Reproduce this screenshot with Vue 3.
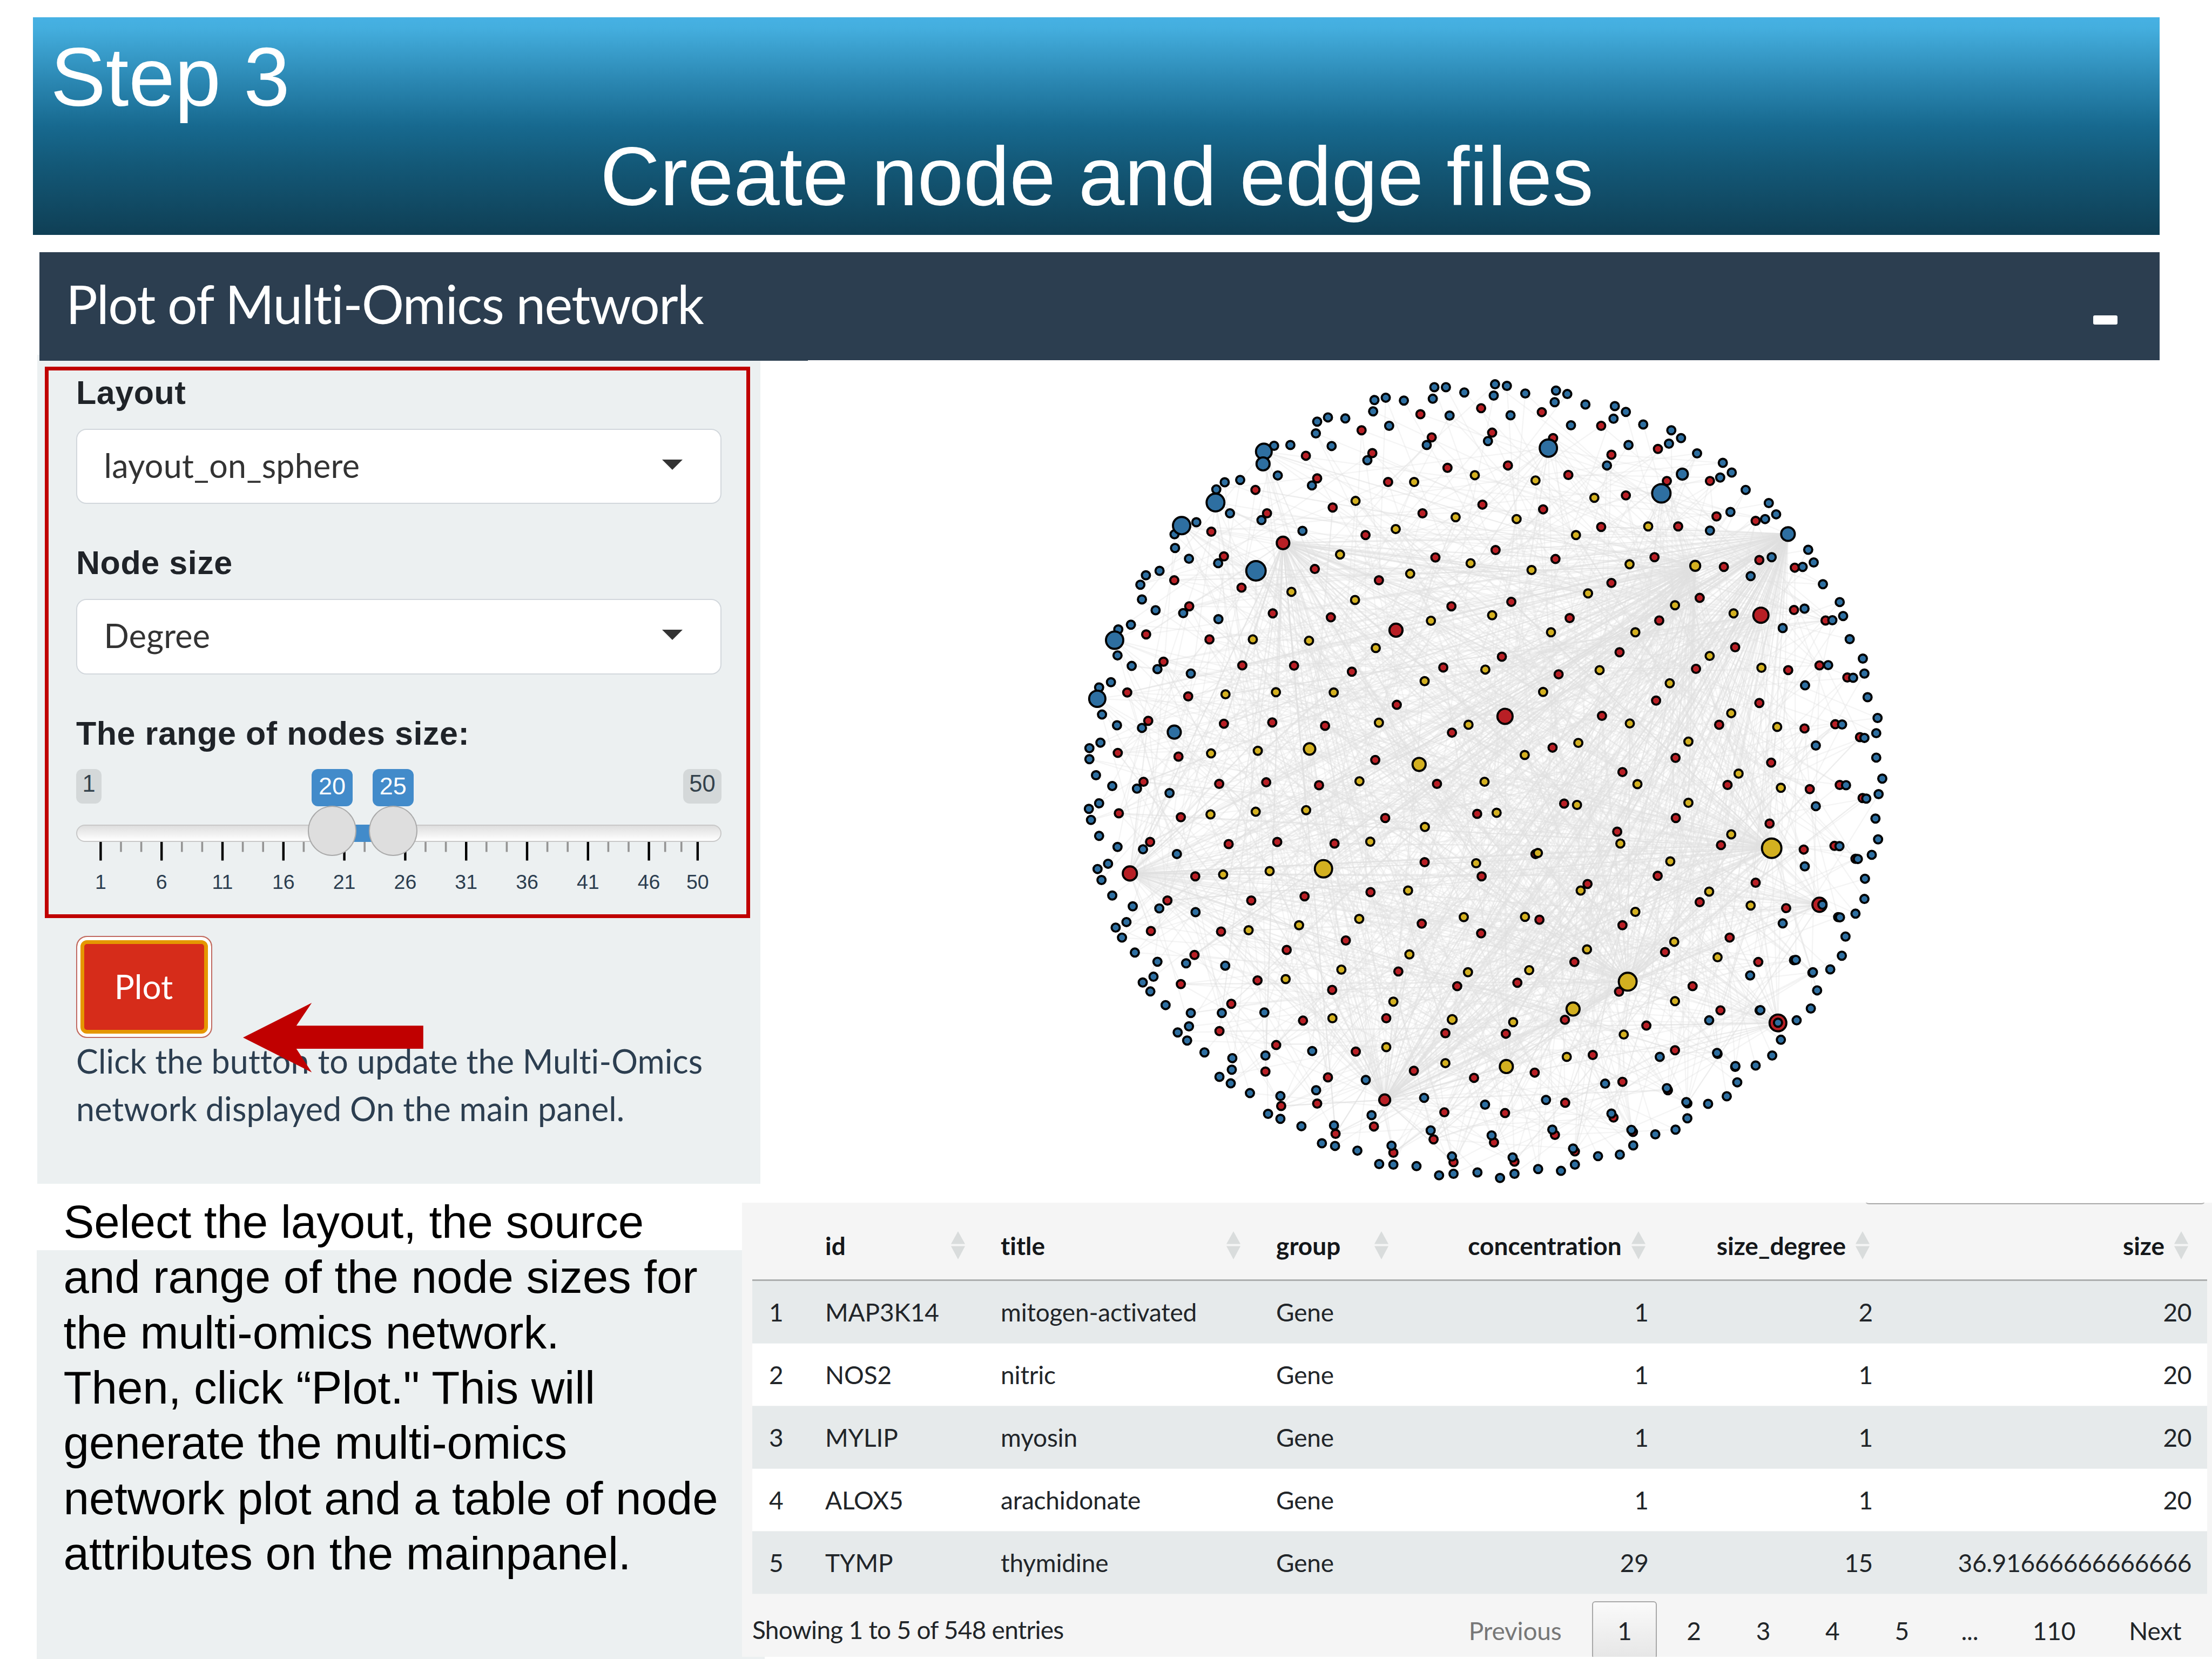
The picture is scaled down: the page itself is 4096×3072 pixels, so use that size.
<script setup>
/* Node positions, listed per quadrant of a 3136 x 3136 canvas. */
const quadrants = [
  {
    x: 0, y: 0,
    red: '1545,158 1314,181 1090,242 1357,269 1131,329 878,339 921,425 686,469 1191,439 1417,385 980,536 1322,558 1550,525 730,558 518,628 1105,641 566,722 1371,726 912,770 377,813 1156,813 633,841 434,912 1432,912 752,939 973,954 270,1019 511,1038 336,1123 636,1137 833,1138 1053,1161 1401,1145 198,1240 430,1255 1224,1287 278,1348 566,1359 750,1354 951,1367 1434,1393 162,1470 393,1484 1142,1497',
    yellow: '1290,439 1521,413 1067,511 1448,573 1220,618 1008,715 1505,748 1275,788 823,857 1065,888 1354,967 676,1038 890,1043 1144,1071 1561,1153 1330,1197 572,1247 764,1239 984,1240 1156,1355 1497,1363 517,1472 695,1462',
    blue: '1367,78 1411,78 1481,98 1361,122 1139,127 1182,118 1251,129 1134,170 921,209 962,193 1028,197 916,254 1195,225 1425,186 976,302 757,301 819,298 1338,298 1112,356 771,414 901,452 569,440 628,431 537,467 589,558 709,584 865,625 378,638 461,592 380,690 433,731 544,748 321,777 269,794 248,830 254,886 306,927 411,938 545,961 212,982 164,1000 161,1099 215,1139 313,1151 440,1168 136,1201 91,1221 102,1324 159,1365 254,1375 96,1431 54,1452 54,1494 79,1555',
    redBig: '791,671,24 1221,1003,25',
    yellowBig: '892,1455,22 1309,1514,25',
    blueBig: '718,323,30 715,370,25 534,517,34 405,605,33 688,777,37 150,1041,33 84,1264,31 377,1391,25'
  },
  {
    x: 1568, y: 0,
    red: '208,173 19,251 251,272 434,225 473,335 650,313 848,435 684,435 79,376 309,412 528,490 213,543 873,570 1022,587 434,610 727,608 32,698 637,725 260,732 901,762 1036,736 1171,765 473,823 809,880 92,895 655,966 1168,926 1288,966 314,957 944,1068 504,1087 56,1104 795,1150 1265,1137 1146,1155 1371,1183 272,1171 643,1271 1036,1280 437,1329 883,1363 1325,1361 1208,1377 1419,1410 249,1450 717,1489 1081,1507 515,1543',
    yellow: '184,433 408,499 112,580 338,641 613,608 542,752 169,774 384,863 715,908 938,939 19,946 564,1011 243,1011 847,1101 1044,1146 428,1155 695,1205 213,1238 929,1319 1104,1371 543,1358 766,1427 347,1432 143,1478 957,1549',
    blue: '30,67 75,73 145,102 25,110 262,91 305,104 257,135 374,144 486,150 528,172 481,198 89,185 319,223 594,220 701,242 738,272 692,293 538,298 799,330 897,366 931,403 887,422 456,376 3,283 984,469 1072,519 1100,562 1058,580 926,553 848,624 1083,725 1003,797 1222,697 1243,745 1201,762 1278,828 1342,896 1355,949 1314,965 1208,921 1125,995 1380,1037 1430,1111 1436,1168 1393,1184 1298,1136 1210,1213 1448,1258 1486,1337 1481,1395 1436,1413 1351,1362 1251,1442 1481,1488 1504,1568',
    redBig: '1042,946,29 68,1331,29',
    yellowBig: '792,758,19',
    blueBig: '233,310,33 663,482,35 743,409,21 1145,637,26'
  },
  {
    x: 0, y: 1568,
    red: '260,12 548,20 727,14 928,25 1377,20 166,132 402,147 1180,150 1530,134 285,241 584,249 769,241 987,247 1330,318 457,372 1547,372 1124,432 351,464 670,464 873,448 288,580 555,582 1319,552 1545,589 1030,616 805,652 454,671 694,768 1230,734 402,782 978,804 1454,790 594,857 867,921 1184,912 549,961 1409,969 765,1014 1068,1039 724,1115 1289,1112 962,1137 1518,1139 921,1237 784,1246 1405,1270 1137,1324 991,1352 1364,1373 1211,1424 1440,1460',
    yellow: '1082,10 1558,12 515,136 687,126 879,120 1331,184 1123,240 1526,322 563,365 740,352 1267,426 1479,527 1081,534 852,558 660,577 1272,669 1013,727 1495,737 801,763 1211,849 979,912 1435,917,17 1184,1022 1409,1083',
    blue: '141,28 235,38 359,55 91,94 52,115 60,157 91,218 161,260 258,269 387,287 125,324 85,344 100,386 141,445 219,486 320,494 458,508 195,546 154,567 178,605 227,662 313,697 422,703 571,712 298,754 257,776 286,810 344,862 440,892 558,892 720,890 433,943 390,966 426,997 492,1042 598,1064 724,1054 902,1037 596,1108 549,1135 592,1160 665,1197 781,1208 917,1186 1106,1147 734,1276 781,1295 861,1323 985,1320 1128,1281 1328,1215 1560,1241 939,1388 989,1398 1074,1416 1204,1397 1353,1339 1157,1467 1211,1469 1299,1475 1434,1438 1385,1510 1440,1504 1531,1499',
    redBig: '208,361,27 1178,1223,21',
    yellowBig: '945,343,33',
    blueBig: ''
  },
  {
    x: 1568, y: 1568,
    red: '915,24 1228,40 1342,24 1429,74 293,95 718,150 1075,171 495,202 890,253 1205,270 1322,256 184,287 649,370 1022,396 382,401 809,470 1138,493 199,537 515,558 923,605 677,660 332,698 1032,698 115,777 502,811 782,790 888,882 296,918 606,940 71,971 715,1034 402,1052 181,1119 515,1154 297,1234 68,1273 481,1290 258,1356 26,1385 334,1419 555,1345 104,1458 688,1186 762,1236 1402,305 1336,527 1168,691 1238,739 1037,882 877,1048 944,1097',
    yellow: '572,21 1118,35 766,92 36,130 342,100 507,247 929,212 193,283 697,315 356,426 845,430 144,526 564,507 1003,483 712,621 380,650 877,680 160,729 715,847 99,927 520,974 303,1059',
    blue: '1490,59 1366,25 1443,76 1251,105 1478,152 1488,231 1341,257 1464,290 1411,306 1209,334 1438,381 1436,458 1402,514 1343,528 1125,551 1276,480 1364,601 1350,674 1306,726 1240,737 1175,690 1001,749 1256,806 1232,875 1178,920 1040,881 845,920 1107,929 1118,994 1085,1054 1022,1092 945,1094 875,1044 657,1059 952,1156 912,1209 841,1238 758,1231 684,1178 449,1161 762,1293 717,1336 640,1354 549,1337 473,1275 224,1223 556,1396 505,1431 422,1437 327,1408 248,1336 17,1358 334,1469 281,1493 194,1486 97,1442 104,1504 49,1520',
    redBig: '1265,480,27 1107,930,32',
    yellowBig: '1083,265,37 535,773,34 327,877,25 73,1096,25',
    blueBig: ''
  }
]

function parse(list, q, color) {
  return list.split(' ').filter(Boolean).map((item) => {
    const [x, y, r = 15.5] = item.split(',').map(Number)
    return { x: x + q.x, y: y + q.y, r, color }
  })
}
const collect = (key, color) => quadrants.flatMap((q) => parse(q[key], q, color))

const nodes = [
  ...collect('redBig', 'red'),
  ...collect('red', 'red'),
  ...collect('yellow', 'yellow'),
  ...collect('yellowBig', 'yellow'),
  ...collect('blue', 'blue'),
  ...collect('blueBig', 'blue')
]

/* Seeded generator, so the edges are the same on every load. */
let seed = 20231
function random() {
  seed = (seed * 1664525 + 1013904223) % 4294967296
  return seed / 4294967296
}
const line = (x, y, n) => `M${x} ${y}L${n.x} ${n.y}`
const pick = (list) => list[Math.floor(random() * list.length)]

/* [x, y, number of edges, rightmost x a neighbour may have, topmost y] */
const hubs = [
  [2713, 637, 190, 2700, 560],
  [2360, 758, 130, 2450, 430],
  [791, 671, 110, 2900, 620],
  [208, 1929, 80, 2600, 900],
  [1178, 2791, 120, 2900, 1100],
  [2651, 1833, 120, 2900, 600],
  [2103, 2341, 120, 3000, 700],
  [2833, 2048, 35, 2800, 900],
  [2675, 2498, 35, 2700, 1300],
  [2610, 946, 35, 3000, 900],
  [1641, 2664, 25, 3000, 900],
  [945, 1911, 16, 3000, 400],
  [1636, 1331, 16, 3000, 400],
  [1895, 2445, 20, 3000, 400],
  [688, 777, 14, 3000, 500],
  [405, 605, 12, 3000, 600],
  [534, 517, 10, 3000, 500],
  [718, 323, 12, 3000, 300],
  [2231, 482, 14, 3000, 400],
  [1801, 310, 14, 3000, 400],
  [150, 1041, 8, 2600, 1000],
  [84, 1264, 8, 2600, 900]
]
const inner = nodes.filter((n) => n.color !== 'blue')
const hubEdges = hubs.flatMap(([x, y, count, maxX, minY]) => {
  const pool = (count > 14 ? inner : nodes).filter((n) => n.x <= maxX && n.y >= minY)
  return Array.from({ length: count }, () => line(x, y, pick(pool)))
})
const looseEdges = Array.from({ length: 520 }, () => {
  const a = pick(nodes)
  return line(a.x, a.y, pick(inner))
})
const edges = [...looseEdges, ...hubEdges]

/* Range slider */
const pos = (v) => 45.4 + (v - 1) * 22.56
const majors = [1, 6, 11, 16, 21, 26, 31, 36, 41, 46, 50]
const minors = majors.slice(0, -1).flatMap((v, i) => {
  const step = (majors[i + 1] - v) / 3
  return [v + step, v + step * 2]
})
const range = [20, 25]

/* Node table */
const columns = [
  { key: 'n', label: '' },
  { key: 'id', label: 'id' },
  { key: 'title', label: 'title' },
  { key: 'group', label: 'group' },
  { key: 'conc', label: 'concentration', num: true },
  { key: 'degree', label: 'size_degree', num: true },
  { key: 'size', label: 'size', num: true }
]
const rows = [
  { n: 1, id: 'MAP3K14', title: 'mitogen-activated', group: 'Gene', conc: '1', degree: '2', size: '20' },
  { n: 2, id: 'NOS2', title: 'nitric', group: 'Gene', conc: '1', degree: '1', size: '20' },
  { n: 3, id: 'MYLIP', title: 'myosin', group: 'Gene', conc: '1', degree: '1', size: '20' },
  { n: 4, id: 'ALOX5', title: 'arachidonate', group: 'Gene', conc: '1', degree: '1', size: '20' },
  { n: 5, id: 'TYMP', title: 'thymidine', group: 'Gene', conc: '29', degree: '15', size: '36.91666666666666' }
]
const pages = ['1', '2', '3', '4', '5']
</script>

<template>
  <div class="slide">
    <header class="banner">
      <div class="step">Step 3</div>
      <div class="title">Create node and edge files</div>
    </header>

    <div class="bar">
      <span class="bar-title">Plot of Multi-Omics network</span>
      <span class="collapse"></span>
    </div>

    <main class="main">
      <aside class="panel">
        <section class="settings">
          <label class="label">Layout</label>
          <div class="select">
            <span>layout_on_sphere</span>
            <i class="caret"></i>
          </div>
          <label class="label second">Node size</label>
          <div class="select">
            <span>Degree</span>
            <i class="caret"></i>
          </div>
          <label class="label second">The range of nodes size:</label>
          <div class="slider">
            <div class="ends">
              <span class="end min">1</span>
              <span class="end max">50</span>
            </div>
            <div class="track"></div>
            <div class="fill" :style="{ left: pos(range[0]) + 'px', width: pos(range[1]) - pos(range[0]) + 'px' }"></div>
            <svg class="ticks" width="1195" height="36">
              <rect v-for="v in minors" :key="'m' + v" :x="pos(v) - 1.8" y="0" width="3.6" height="18.5" fill="#949494" />
              <rect v-for="v in majors" :key="v" :x="pos(v) - 2.2" y="0" width="4.4" height="34.5" fill="#000" />
            </svg>
            <div class="scale">
              <span v-for="v in majors" :key="v" :style="{ left: pos(v) + 'px' }">{{ v }}</span>
            </div>
            <template v-for="v in range" :key="v">
              <span class="value" :style="{ left: pos(v) + 'px' }">{{ v }}</span>
              <span class="handle" :style="{ left: pos(v) + 'px' }"></span>
            </template>
          </div>
        </section>
        <button class="plot">Plot</button>
        <p class="help">Click the button to update the Multi-Omics<br />network displayed On the main panel.</p>
        <svg class="arrow" width="334" height="130" viewBox="0 0 334 130">
          <path d="M0 64.2L127.3 0L98.8 42.2H333.8V85H98.8L127.3 128.7Z" fill="#c00000" />
        </svg>
      </aside>

      <svg class="network" viewBox="0 0 3136 3136">
        <path v-for="(d, i) in edges" :key="'e' + i" class="edge" :d="d" />
        <circle v-for="(n, i) in nodes" :key="i" :cx="n.x" :cy="n.y" :r="n.r" :class="n.color" />
      </svg>
    </main>

    <div class="bottom">
      <section class="note">
        <p>Select the layout, the source<br />and range of the node sizes for<br />the multi-omics network.<br />Then, click “Plot." This will<br />generate the multi-omics<br />network plot and a table of node<br />attributes on the mainpanel.</p>
      </section>

      <section class="data">
        <i class="search-edge"></i>
        <div class="row head">
          <div v-for="c in columns" :key="c.key" class="cell" :class="{ num: c.num }">
            <span>{{ c.label }}</span>
            <svg v-if="c.label" class="sort" width="26" height="52" viewBox="0 0 26 52">
              <path d="M13 0L26 23.5H0ZM0 27.5H26L13 52Z" fill="#d9dcdc" />
            </svg>
          </div>
        </div>
        <div v-for="r in rows" :key="r.n" class="row body">
          <div v-for="c in columns" :key="c.key" class="cell" :class="{ num: c.num }">{{ r[c.key] }}</div>
        </div>
        <footer class="foot">
          <span class="info">Showing 1 to 5 of 548 entries</span>
          <nav class="pager">
            <span class="page prev">Previous</span>
            <span v-for="p in pages" :key="p" class="page" :class="{ current: p === '1' }">{{ p }}</span>
            <span class="page dots">...</span>
            <span class="page last">110</span>
            <span class="page next">Next</span>
          </nav>
        </footer>
      </section>
    </div>
  </div>
</template>

<style>
body {
  background: #fff;
}
</style>

<style scoped>
.slide {
  width: 4096px;
  height: 3072px;
  overflow: hidden;
  display: flex;
  flex-direction: column;
  background: #fff;
  font-family: Lato, "Open Sans", sans-serif;
  font-variant-ligatures: none;
  box-sizing: border-box;
  padding-top: 32px;
}
.slide * {
  box-sizing: border-box;
}

.banner {
  flex: none;
  width: 3938px;
  height: 403px;
  margin-left: 61px;
  padding: 18.2px 0 0 32.6px;
  background: linear-gradient(#46b1e4 0%, #44aede 5%, #2a86b1 30%, #17698f 50%, #135877 68%, #0f3f55 100%);
  color: #fff;
  font: 153.6px/184.4px "Liberation Sans", Arial, sans-serif;
  font-variant-ligatures: none;
  letter-spacing: -0.2px;
}
.step {
  padding-top: 1px;
  margin-bottom: -1px;
}
.title {
  margin-left: -32.6px;
  padding-left: 2px;
  text-align: center;
}

.bar {
  flex: none;
  position: relative;
  z-index: 1;
  width: 3926px;
  height: 200px;
  margin: 32px 0 0 73px;
  padding: 0 78px 0 49px;
  display: flex;
  align-items: center;
  justify-content: space-between;
  background: #2c3e50;
  color: #fff;
}
.bar::after {
  content: "";
  position: absolute;
  left: 0;
  top: 100%;
  width: 1423px;
  height: 1px;
  background: #2c3e50;
}
.bar-title {
  font-size: 98px;
  line-height: 120px;
  letter-spacing: -1.7px;
  padding-bottom: 11px;
}
.collapse {
  width: 45px;
  height: 17px;
  margin-top: 51px;
  border-radius: 3px;
  background: #fff;
}

.main {
  flex: none;
  display: flex;
  height: 1534.5px;
  margin-top: -10px;
  padding-left: 69px;
}
.panel {
  position: relative;
  flex: none;
  width: 1339px;
  background: #ecf0f1;
  padding: 22px 0 0 14px;
}
.settings {
  width: 1306px;
  height: 1021px;
  border: 7px solid #c00000;
  padding: 5.6px 52px 0 51px;
}
.label {
  display: block;
  height: 70px;
  font: bold 61px/70px "Liberation Sans", Arial, sans-serif;
  letter-spacing: 0.55px;
  color: #1f2328;
}
.label.second {
  margin-top: 74px;
}
.select {
  display: flex;
  align-items: center;
  justify-content: space-between;
  width: 1195px;
  height: 139.5px;
  margin-top: 32px;
  padding: 0 70px 3px 49.5px;
  border: 2.6px solid #d2d7dc;
  border-radius: 19px;
  background: #fff;
  color: #333;
  font-size: 61px;
  letter-spacing: 0.25px;
}
.label.second + .select {
  padding-bottom: 5px;
}
.caret {
  border: 19px solid transparent;
  border-top-color: #333;
  border-bottom: 0;
  margin-top: -2px;
}

.slider {
  position: relative;
  width: 1195px;
  margin-top: 31px;
  font-family: "Liberation Sans", Arial, sans-serif;
}
.ends {
  display: flex;
  justify-content: space-between;
  height: 103px;
}
.end {
  height: 64px;
  border-radius: 12px;
  background: #d4d8d9;
  color: #34424c;
  font-size: 43.5px;
  line-height: 54px;
  text-align: center;
}
.min {
  width: 47px;
}
.max {
  width: 71px;
}
.track {
  height: 32px;
  border: 2.5px solid #c8c8c8;
  border-radius: 16px;
  background: linear-gradient(#dedede, #fff);
}
.fill {
  position: absolute;
  top: 103px;
  height: 32px;
  background: #428bca;
}
.ticks {
  display: block;
}
.scale {
  position: relative;
  height: 60px;
  font-size: 37.5px;
  line-height: 40px;
  color: #2c3e50;
}
.scale span {
  position: absolute;
  top: 18.5px;
  transform: translateX(-50%);
}
.value {
  position: absolute;
  top: 0;
  width: 76px;
  height: 69px;
  border-radius: 12px;
  background: #428bca;
  color: #fff;
  font-size: 45px;
  line-height: 63px;
  text-align: center;
  transform: translateX(-50%);
}
.handle {
  position: absolute;
  top: 68.5px;
  width: 90px;
  height: 92.5px;
  border: 2.5px solid #aaa;
  border-radius: 50%;
  background: #dedede;
  transform: translateX(-50%);
}

.plot {
  display: block;
  width: 252px;
  height: 189px;
  margin: 33px 0 0 58px;
  padding: 0 2px 3px 0;
  border: 2.5px solid #c06a62;
  border-radius: 20px;
  background: #d62c1a;
  box-shadow: inset 0 0 0 6px #fff, inset 0 0 0 13px #e59700;
  color: #fff;
  font: 62px/72px Lato, sans-serif;
}
.help {
  margin: -1px 0 0 58px;
  white-space: nowrap;
  color: #2c3e50;
  font-size: 61px;
  line-height: 87.5px;
  letter-spacing: 0.13px;
}
.arrow {
  position: absolute;
  left: 381px;
  top: 1200.3px;
}

.network {
  flex: none;
  width: 1525.6px;
  height: 1525.6px;
  margin: 22px 0 0 582.8px;
  overflow: visible;
}
.network circle {
  stroke: #000;
  stroke-width: 8;
}
.red {
  fill: #b81f25;
}
.yellow {
  fill: #d3b020;
}
.blue {
  fill: #2e6fa1;
}
.edge {
  fill: none;
  stroke: #e0e0e0;
  stroke-opacity: 0.36;
  stroke-width: 4.6;
}

.bottom {
  flex: none;
  display: flex;
  height: 880.5px;
}
.note {
  position: relative;
  flex: none;
  width: 1306.5px;
  margin-left: 67.5px;
  background: linear-gradient(#fff 123px, #ecf0f1 123px);
}
.note::after {
  content: "";
  position: absolute;
  left: 100%;
  bottom: 0;
  width: 42px;
  height: 4px;
  background: #ecf0f1;
}
.note p {
  margin: 0;
  padding: 20.5px 0 0 50px;
  white-space: nowrap;
  color: #000;
  font: 85.3px/102.35px "Liberation Sans", Arial, sans-serif;
  letter-spacing: -0.06px;
}

.data {
  position: relative;
  flex: 1;
  height: 841px;
  margin-top: 35.5px;
  padding-left: 19px;
  overflow: hidden;
  background: #f5f5f5;
  color: #212529;
  font-size: 46px;
  letter-spacing: -0.2px;
}
.search-edge {
  position: absolute;
  left: 2079px;
  top: -8px;
  width: 631px;
  height: 11px;
  border: solid #aaa;
  border-width: 0 0 2.5px;
  border-radius: 0 0 8px 8px;
}
.row {
  display: grid;
  grid-template-columns: 104.1px 325px 510px 273.5px 476px 415.4px 590.2px;
  width: 2694px;
  align-items: center;
}
.head {
  height: 145px;
  padding-top: 16px;
  border-bottom: 3.5px solid #acaeae;
  color: #14171a;
  font-weight: bold;
  letter-spacing: 0;
}
.body {
  height: 116px;
  background: #fff;
  border-bottom: 1.5px solid #eef1f1;
}
.body:nth-of-type(even) {
  background: #e6eaeb;
}
.cell {
  padding: 0 31px;
  white-space: nowrap;
}
.num {
  padding-right: 29px;
  text-align: right;
}
.body .num {
  letter-spacing: -0.3px;
}
.head .cell {
  display: flex;
  align-items: center;
  justify-content: space-between;
  padding-right: 35px;
}
.head .num {
  justify-content: flex-end;
  gap: 18px;
}
.foot {
  display: flex;
  justify-content: space-between;
  height: 115px;
}
.info {
  padding-top: 37.5px;
  letter-spacing: -0.75px;
}
.pager {
  display: flex;
  gap: 9px;
  margin: 12.5px 13px 0 0;
}
.page {
  width: 119.4px;
  height: 107px;
  padding-top: 27.5px;
  text-align: center;
}
.current {
  border: 2.5px solid #a8a8a8;
  border-radius: 6px;
  padding-top: 25px;
  background: linear-gradient(#fafafa, #e6e6e6);
}
.prev {
  width: 267.6px;
  color: #777;
}
.dots {
  width: 118px;
  padding-right: 4px;
}
.last {
  width: 172px;
}
.next {
  width: 184.6px;
}
</style>
